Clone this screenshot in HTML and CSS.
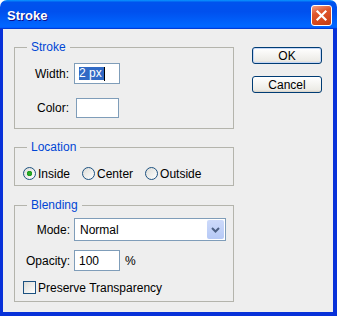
FILE: index.html
```html
<!DOCTYPE html>
<html lang="en">
<head>
    <meta charset="UTF-8">
    <meta name="viewport" content="width=device-width, initial-scale=1.0">
    <title>Stroke</title>
    <link rel="stylesheet" href="styles.css">
</head>
<body>
    <div class="window">
        <div class="titlebar">
            <span class="title">Stroke</span>
            <span class="close">
                <svg width="13" height="13" viewBox="0 0 13 13"><path d="M2.5 2.5 L10.5 10.5 M10.5 2.5 L2.5 10.5" stroke="#fff" stroke-width="2.2" stroke-linecap="square"/></svg>
            </span>
        </div>
        <div class="client">
            <div class="groups">
                <fieldset class="group stroke">
                    <legend>Stroke</legend>
                    <div class="row">
                        <span class="label">Width:</span>
                        <div class="field width"><span class="sel">2 px</span><span class="caret"></span></div>
                    </div>
                    <div class="row">
                        <span class="label">Color:</span>
                        <div class="field color"></div>
                    </div>
                </fieldset>

                <fieldset class="group location">
                    <legend>Location</legend>
                    <div class="radios">
                        <span class="option"><span class="radio checked"></span>Inside</span>
                        <span class="option"><span class="radio"></span>Center</span>
                        <span class="option"><span class="radio"></span>Outside</span>
                    </div>
                </fieldset>

                <fieldset class="group blending">
                    <legend>Blending</legend>
                    <div class="row">
                        <span class="label">Mode:</span>
                        <div class="select">
                            <span class="value">Normal</span>
                            <span class="drop">
                                <svg width="9" height="6" viewBox="0 0 9 6"><path d="M1 1 L4.5 4.5 L8 1" fill="none" stroke="#4d6185" stroke-width="2"/></svg>
                            </span>
                        </div>
                    </div>
                    <div class="row">
                        <span class="label">Opacity:</span>
                        <div class="field opacity">100</div>
                        <span class="unit">%</span>
                    </div>
                    <div class="check-row"><span class="checkbox"></span>Preserve Transparency</div>
                </fieldset>
            </div>

            <div class="buttons">
                <div class="button default">OK</div>
                <div class="button">Cancel</div>
            </div>
        </div>
    </div>
</body>
</html>
```

FILE: styles.css
```css
* {
    box-sizing: border-box;
}
body {
    margin: 0;
    background: #fff;
    font-family: "Liberation Sans", Arial, sans-serif;
    font-size: 12px;
    color: #000;
}
.window {
    width: 337px;
    height: 316px;
    display: flex;
    flex-direction: column;
}
.titlebar {
    height: 29px;
    flex: none;
    display: flex;
    align-items: center;
    justify-content: space-between;
    padding: 2px 5px 0 7px;
    border-radius: 7px 7px 0 0;
    background: linear-gradient(180deg, #0997ff, #0053ee 8%, #0050ee 40%, #0066ff 88%, #0066ff 93%, #005bff 95%, #003dd7 96%, #003dd7);
}
.title {
    color: #fff;
    font-weight: bold;
    font-size: 13px;
    text-shadow: 1px 1px #0f1089;
}
.close {
    width: 21px;
    height: 21px;
    display: flex;
    align-items: center;
    justify-content: center;
    border: 1px solid #fff;
    border-radius: 3px;
    background: linear-gradient(160deg, #f2a088, #e0572d 35%, #d2461c 75%, #c03c14);
}
.client {
    flex: 1;
    display: flex;
    padding: 11px 11px 0 11px;
    background: #eeeeee;
    border: solid #0831d9;
    border-width: 0 4px 4px 3px;
}
.groups {
    width: 220px;
    display: flex;
    flex-direction: column;
}
.group {
    margin: 0;
    padding: 0;
    min-width: 0;
    border: 1px solid #b4b4ac;
}
.location {
    margin-top: 11px;
    padding: 13px 0 5px;
}
.blending {
    margin-top: 12px;
    padding: 6px 0 7px;
}
.stroke {
    padding: 9px 0 10px;
}
legend {
    margin-left: 12px;
    padding: 0 4px;
    line-height: 14px;
    color: #0046d5;
}
.row {
    display: flex;
    align-items: center;
}
.stroke .row + .row {
    margin-top: 14px;
}
.blending .row + .row {
    margin-top: 9px;
}
.label {
    width: 54px;
    margin-right: 5px;
    text-align: right;
}
.blending .label {
    width: 55px;
    margin-right: 4px;
}
.field {
    height: 21px;
    display: flex;
    align-items: center;
    padding-left: 4px;
    background: #fff;
    border: 1px solid #7f9db9;
}
.field.width {
    width: 46px;
}
.field.color {
    width: 43px;
    height: 20px;
    margin-left: 2px;
}
.field.opacity {
    width: 46px;
}
.sel {
    padding-right: 2px;
    line-height: 13px;
    background: #316ac5;
    color: #fff;
}
.caret {
    width: 1px;
    height: 14px;
    background: #000;
}
.unit {
    margin-left: 5px;
}
.radios {
    display: flex;
    gap: 12px;
    padding-left: 8px;
    height: 13px;
    align-items: center;
}
.option {
    display: flex;
    align-items: center;
}
.radio {
    width: 13px;
    height: 13px;
    margin-right: 2px;
    border-radius: 50%;
    border: 1px solid #1c5180;
    background: linear-gradient(135deg, #dcdcd7, #fff);
}
.radio.checked {
    background: radial-gradient(circle, #2fb52f 0, #1e9a1e 2.5px, transparent 3px), linear-gradient(135deg, #dcdcd7, #fff);
}
.select {
    width: 152px;
    height: 23px;
    display: flex;
    align-items: center;
    padding: 1px;
    background: #fff;
    border: 1px solid #7f9db9;
}
.value {
    flex: 1;
    padding-left: 4px;
}
.drop {
    width: 17px;
    height: 19px;
    display: flex;
    align-items: center;
    justify-content: center;
    border-radius: 2px;
    background: linear-gradient(#cddafa, #b6c9f6);
}
.check-row {
    height: 13px;
    margin-top: 10px;
    padding-left: 8px;
    display: flex;
    align-items: center;
}
.checkbox {
    width: 13px;
    height: 13px;
    margin-right: 2px;
    border: 1px solid #1c5180;
    background: linear-gradient(135deg, #dcdcd7, #fff);
}
.buttons {
    margin-left: 18px;
    padding-top: 7px;
    display: flex;
    flex-direction: column;
    gap: 12px;
}
.button {
    width: 70px;
    height: 17px;
    display: flex;
    align-items: center;
    justify-content: center;
    border: 1px solid #003c74;
    border-radius: 3px;
    background: linear-gradient(#fff, #ecebe6 86%, #d6d0c5);
}
.button.default {
    box-shadow: inset 0 0 0 1px #c4d6f6;
}
```
